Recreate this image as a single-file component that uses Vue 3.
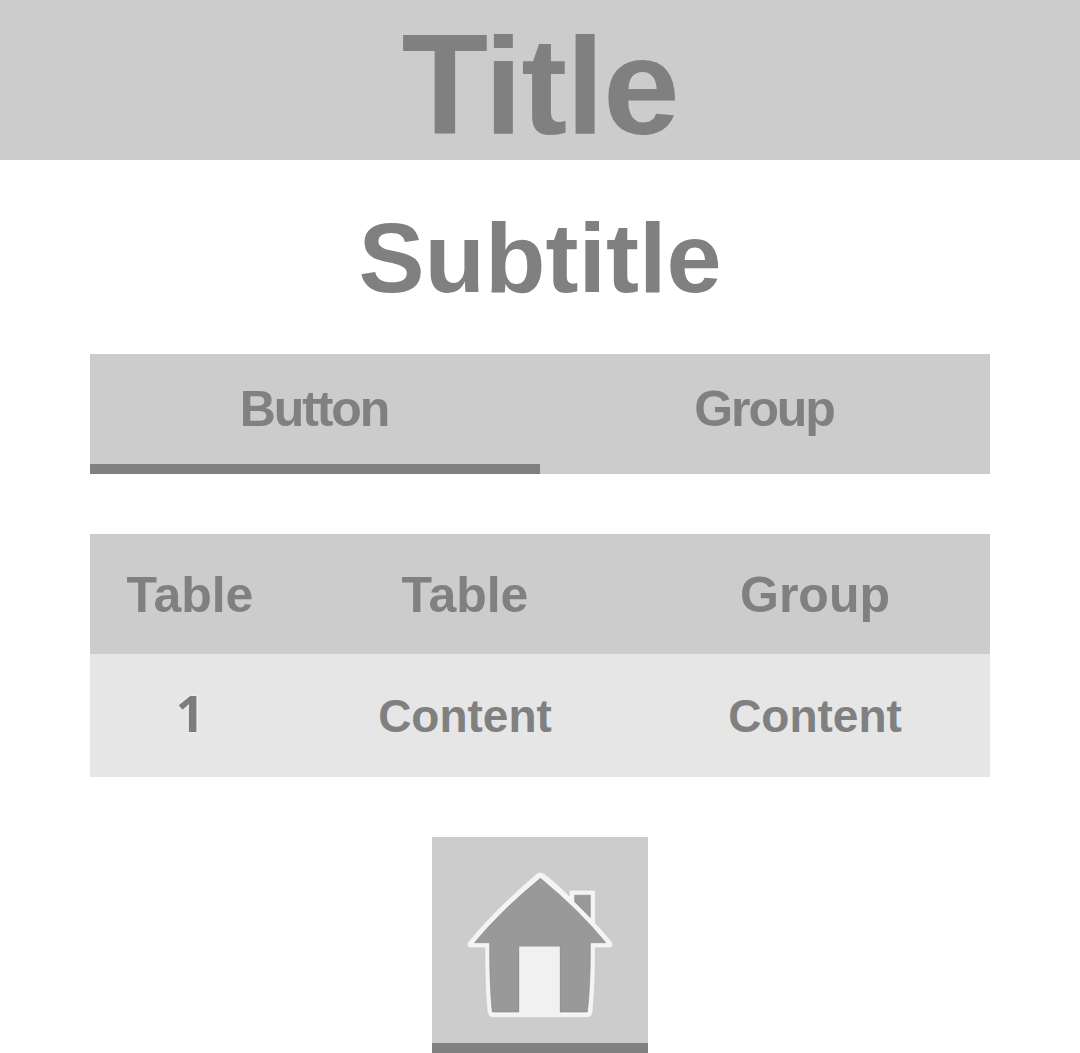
<script setup>
const tabs = [
  { label: 'Button', active: true },
  { label: 'Group', active: false },
]
const columns = ['Table', 'Table', 'Group']
const rows = [['1', 'Content', 'Content']]
</script>

<template>
  <div class="page">
    <header class="banner"><h1 class="title">Title</h1></header>
    <h2 class="subtitle">Subtitle</h2>

    <nav class="tabs">
      <button v-for="tab in tabs" :key="tab.label" class="tab" :class="{ active: tab.active }">
        {{ tab.label }}
      </button>
    </nav>

    <div class="table">
      <div class="row head">
        <div v-for="(c, i) in columns" :key="i" class="cell">{{ c }}</div>
      </div>
      <div v-for="(r, j) in rows" :key="j" class="row body">
        <div v-for="(c, i) in r" :key="i" class="cell" :class="{ index: i === 0 }">{{ c }}</div>
      </div>
    </div>

    <button class="home" aria-label="Home">
      <svg width="216" height="206" viewBox="0 0 216 206">
        <path fill="#f4f4f4" stroke="#c2c2c2" stroke-width=".4" d="M137.3 53.3H163.3V86Q172 95 180 105.300Q182.300 110.500 177 110.700H163.200C163.200 135 162.500 157 160.800 174Q160 180.500 155 180.500H61Q56.500 180.500 55.300 174C53.500 157 53 135 53 110.700H39.500Q33.500 110.500 35.900 105.500Q61 74 104.500 36.800Q108.500 33.800 112.500 36.800Q126 47.500 137.300 59Z" />
        <path fill="#999" stroke="#858585" stroke-width=".6" d="M142.700 58.200H158.300V80.500L142.700 64.800Z" />
        <path fill="#999" stroke="#858585" stroke-width=".6" d="M108.400 41.300Q147 73 173.800 105.700H158.300C158.500 134 157.500 158 155.300 175H128V109.300H87V175H60.300C58.500 158 57.500 134 57.700 105.700H42.500Q69 73.500 108.400 41.300Z" />
        <path fill="#f1f1f1" d="M87.500 109.800H127.500V178H87.500Z" />
      </svg>
    </button>
  </div>
</template>

<style>
body {
  margin: 0;
  background: #fff;
}
</style>

<style scoped>
.page {
  width: 1080px;
  height: 1053px;
  overflow: hidden;
  display: flex;
  flex-direction: column;
  align-items: center;
  color: #808080;
  font-family: "Liberation Sans", Arial, sans-serif;
  font-weight: 700;
}
.banner {
  width: 100%;
  height: 160px;
  background: #ccc;
  display: flex;
  justify-content: center;
}
h1, h2 {
  margin: 0;
  font-weight: 700;
  white-space: nowrap;
}
.title {
  font-size: 138px;
  line-height: 170px;
  letter-spacing: -1.3px;
}
/* The capital stands level with the ascenders. */
.title::first-letter {
  font-size: 142px;
  letter-spacing: -4px;
}
.subtitle {
  font-size: 99px;
  line-height: 120px;
  height: 120px;
  margin-top: 38px;
}
.tabs {
  width: 900px;
  height: 120px;
  margin-top: 36px;
  display: flex;
  background: #ccc;
}
.tab {
  flex: 1;
  height: 120px;
  box-sizing: border-box;
  padding: 0 2px 0 0;
  border: 0;
  border-bottom: 10px solid transparent;
  background: none;
  color: inherit;
  font: inherit;
  font-size: 50px;
  line-height: 110px;
  letter-spacing: -2.1px;
}
.tab.active {
  border-bottom-color: #808080;
}
.table {
  width: 900px;
  margin-top: 60px;
}
.row {
  display: grid;
  grid-template-columns: 200px 350px 350px;
  text-align: center;
}
.head {
  height: 120px;
  background: #ccc;
  font-size: 50px;
  line-height: 122px;
}
.body {
  height: 123px;
  background: #e6e6e6;
  font-size: 46px;
  line-height: 124px;
}
.index {
  font-family: "Open Sans", "Liberation Sans", sans-serif;
  font-size: 50px;
  line-height: 119px;
  color: #7c7c7c;
  text-shadow: 0 0 2px #fff, 0 0 1px #fff;
}
.home {
  width: 216px;
  height: 216px;
  box-sizing: border-box;
  margin: 60px 0 0;
  padding: 0;
  border: 0;
  border-bottom: 10px solid #808080;
  background: #ccc;
}
.home svg {
  display: block;
}
</style>
